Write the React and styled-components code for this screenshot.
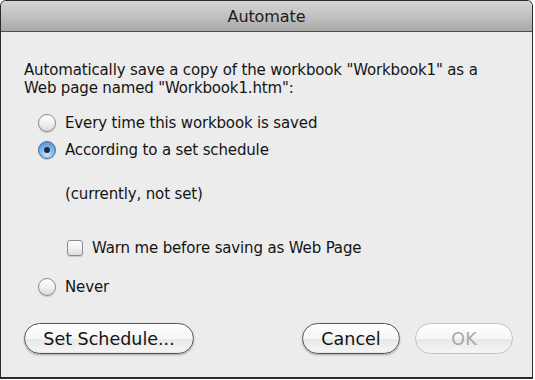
import React from "react";
import styled, { createGlobalStyle } from "styled-components";

const Global = createGlobalStyle`
  html, body { margin: 0; padding: 0; background: #ffffff; }
  #root { width: 535px; height: 380px; }
`;

const Window = styled.div`
  box-sizing: border-box;
  width: 533px;
  height: 379px;
  display: flex;
  flex-direction: column;
  border: 1px solid #2b2b2b;
  border-bottom-width: 2px;
  border-radius: 6px 6px 0 0;
  overflow: hidden;
  background: #ececec;
  font-family: "DejaVu Sans", "Liberation Sans", sans-serif;
  color: #141414;
`;

const TitleBar = styled.div`
  height: 30px;
  flex: none;
  display: flex;
  align-items: center;
  justify-content: center;
  background: linear-gradient(#d4d4d4, #c2c2c2 50%, #a7a7a7);
  border-bottom: 1px solid #4e4e4e;
  font-size: 16px;
  letter-spacing: -0.1px;
  color: #1c1c1c;
`;

const Body = styled.div`
  flex: 1;
  display: flex;
  flex-direction: column;
  padding: 29px 19px 0 23px;
`;

const Intro = styled.p`
  margin: 0;
  font-size: 15px;
  line-height: 18px;
  letter-spacing: -0.15px;
`;

const Options = styled.div`
  display: flex;
  flex-direction: column;
  padding-left: 14px;
  margin-top: 12px;
`;

const Row = styled.label`
  display: flex;
  align-items: center;
  gap: ${(p) => p.$gap || 9}px;
  height: 27px;
  font-size: 15px;
  letter-spacing: -0.15px;
  margin-top: ${(p) => p.$top || 0}px;
  padding-left: ${(p) => p.$indent || 0}px;
`;

const Note = styled.div`
  font-size: 15px;
  letter-spacing: -0.15px;
  height: 27px;
  display: flex;
  align-items: center;
  padding-left: 27px;
  margin-top: 17px;
`;

const Radio = styled.span`
  box-sizing: border-box;
  width: 18px;
  height: 18px;
  flex: none;
  border-radius: 50%;
  display: flex;
  align-items: center;
  justify-content: center;
  border: 1px solid ${(p) => (p.$on ? "#4a6f9a" : "#8c8c8c")};
  background: ${(p) =>
    p.$on
      ? "radial-gradient(circle at 50% 78%, #c6e6ff 0%, #82b8ea 45%, #4a84c6 100%)"
      : "linear-gradient(#ffffff, #f2f2f2 50%, #d8d8d8)"};
  box-shadow: 0 1px 1px rgba(0, 0, 0, 0.18);
`;

const Dot = styled.span`
  width: 6px;
  height: 6px;
  border-radius: 50%;
  background: #1c2b3c;
`;

const Check = styled.span`
  box-sizing: border-box;
  width: 16px;
  height: 16px;
  flex: none;
  border-radius: 3px;
  border: 1px solid #8a8a8a;
  background: linear-gradient(#ffffff, #f0f0f0 50%, #dcdcdc);
  box-shadow: 0 1px 1px rgba(0, 0, 0, 0.15);
`;

const Footer = styled.div`
  margin-top: auto;
  margin-bottom: 23px;
  display: flex;
  align-items: center;
`;

const Button = styled.button`
  box-sizing: border-box;
  height: 31px;
  width: ${(p) => p.$w}px;
  margin-left: ${(p) => p.$ml || 0}px;
  border-radius: 16px;
  border: 1px solid ${(p) => (p.$disabled ? "#c4c4c4" : "#5a5a5a")};
  background: linear-gradient(#ffffff, #f6f6f6 50%, #e8e8e8 51%, #f6f6f6);
  box-shadow: ${(p) =>
    p.$disabled
      ? "none"
      : "0 1px 2px rgba(0, 0, 0, 0.3), inset 0 -1px 1px rgba(0,0,0,0.08)"};
  font-family: "DejaVu Sans", "Liberation Sans", sans-serif;
  font-size: 17.5px;
  color: ${(p) => (p.$disabled ? "#a8a8a8" : "#141414")};
  padding: 0;
`;

const Spacer = styled.div`
  flex: 1;
`;

export default function App() {
  return (
    <>
      <Global />
      <Window>
        <TitleBar>Automate</TitleBar>
        <Body>
          <Intro>
            Automatically save a copy of the workbook "Workbook1" as a
            <br />
            Web page named "Workbook1.htm":
          </Intro>
          <Options>
            <Row>
              <Radio />
              Every time this workbook is saved
            </Row>
            <Row>
              <Radio $on>
                <Dot />
              </Radio>
              According to a set schedule
            </Row>
            <Note>(currently, not set)</Note>
            <Row $indent={29} $top={27}>
              <Check />
              Warn me before saving as Web Page
            </Row>
            <Row $top={12}>
              <Radio />
              Never
            </Row>
          </Options>
          <Footer>
            <Button $w={170}>Set Schedule...</Button>
            <Spacer />
            <Button $w={98}>Cancel</Button>
            <Button $w={98} $ml={15} $disabled>
              OK
            </Button>
          </Footer>
        </Body>
      </Window>
    </>
  );
}
